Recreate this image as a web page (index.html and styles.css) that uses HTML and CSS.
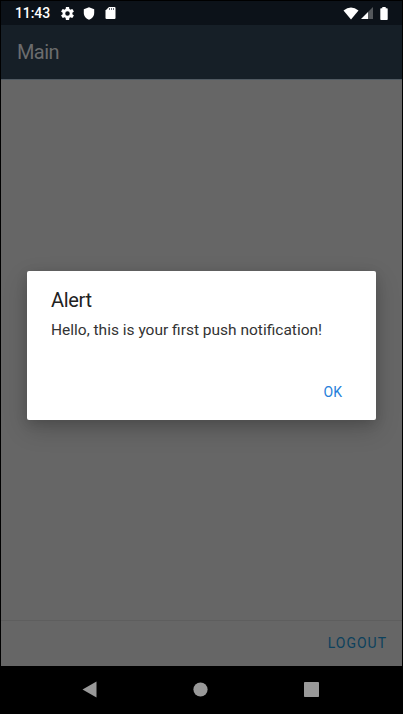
FILE: index.html
```html
<!DOCTYPE html>
<html lang="en">
<head>
<meta charset="utf-8">
<title>Main</title>
<link rel="stylesheet" href="styles.css">
</head>
<body>
<div class="phone">
  <div class="status">
    <span class="clock">11:43</span>
    <svg class="gear" width="13" height="13" viewBox="2 2 20 20"><path fill="#fff" fill-rule="evenodd" d="M19.43 12.98c.04-.32.07-.64.07-.98s-.03-.66-.07-.98l2.11-1.65c.19-.15.24-.42.12-.64l-2-3.46c-.12-.22-.39-.3-.61-.22l-2.49 1c-.52-.4-1.08-.73-1.69-.98l-.38-2.65C14.46 2.18 14.25 2 14 2h-4c-.25 0-.46.18-.49.42l-.38 2.65c-.61.25-1.17.59-1.69.98l-2.49-1c-.23-.09-.49 0-.61.22l-2 3.46c-.13.22-.07.49.12.64l2.11 1.65c-.04.32-.07.65-.07.98s.03.66.07.98l-2.11 1.65c-.19.15-.24.42-.12.64l2 3.46c.12.22.39.3.61.22l2.49-1c.52.4 1.08.73 1.69.98l.38 2.65c.03.24.24.42.49.42h4c.25 0 .46-.18.49-.42l.38-2.65c.61-.25 1.17-.59 1.69-.98l2.49 1c.23.09.49 0 .61-.22l2-3.46c.12-.22.07-.49-.12-.64l-2.11-1.65zM12 15.5A3.5 3.5 0 1 1 12 8.500a3.5 3.5 0 0 1 0 7z"/></svg>
    <svg class="shield" width="12" height="13" viewBox="0 0 12 13"><path fill="#fff" d="M6 .2 11.200 2.200V6c0 3-2.300 5.800-5.200 6.800C3.100 11.800.8 9 .8 6V2.200z"/></svg>
    <svg class="card" width="11" height="12" viewBox="0 0 11 12"><path fill="#fff" d="M4 0h5.500a1 1 0 0 1 1 1v10a1 1 0 0 1-1 1h-8a1 1 0 0 1-1-1V3.500z"/><path stroke="#58606a" stroke-width=".9" d="M4.500 1v2M6.500 1v2M8.500 1v2"/></svg>
    <svg class="wifi" width="16" height="13" viewBox="0 0 16 13"><path fill="#fff" d="M.5 3.500Q8-2.500 15.500 3.500L8 12.500z"/></svg>
    <svg class="signal" width="12" height="12" viewBox="0 0 12 12"><path fill="#fff" d="M0 12 7 5v7z"/><path fill="#54585c" d="M7 5 12 0v12H7z"/></svg>
    <svg class="battery" width="8" height="13" viewBox="0 0 8 13"><path fill="#fff" d="M2.300 0h3.400v1.200H7q.7 0 .7.700v10.300q0 .7-.7.700H1q-.7 0-.7-.7V1.900q0-.7.700-.7h1.300z"/></svg>
  </div>
  <header class="toolbar">Main</header>
  <main class="content">
    <section class="dialog">
      <h1>Alert</h1>
      <p>Hello, this is your first push notification!</p>
      <button class="ok">OK</button>
    </section>
  </main>
  <footer class="footer"><span class="logout">LOGOUT</span></footer>
  <nav class="nav">
    <svg width="15" height="17" viewBox="0 0 15 17"><path fill="#999" d="M.5 8.500 14.500.5v16z"/></svg>
    <svg width="15" height="15" viewBox="0 0 15 15"><circle cx="7.500" cy="7.500" r="7.100" fill="#999"/></svg>
    <svg width="15" height="15" viewBox="0 0 15 15"><rect width="15" height="15" rx=".8" fill="#999"/></svg>
  </nav>
</div>
</body>
</html>
```
FILE: styles.css
```css
* { box-sizing: border-box; }
body { margin: 0; background: #000; font-family: Roboto, "Liberation Sans", sans-serif; }
.phone { width: 403px; height: 714px; padding: 1px 1px 0; display: flex; flex-direction: column; overflow: hidden; }
.status { height: 24px; flex: none; background: #0c1219; display: flex; align-items: center; padding: 0 14px 0 14px; }
.clock { color: #fff; font-size: 14px; font-weight: 500; line-height: 16px; letter-spacing: -.1px; width: 35px; white-space: nowrap; }
.gear { margin-left: 11px; }
.shield { margin-left: 9px; }
.card { margin-left: 10px; }
.wifi { margin-left: auto; }
.signal { margin-left: 2px; }
.battery { margin-left: 7px; }
.toolbar { height: 54px; flex: none; background: #161f27; color: #6b6c6d; font-size: 20px; letter-spacing: -.6px; line-height: 54px; padding-left: 16px; }
.content { flex: 1; background: #666; border-top: 1px solid #505961; padding: 191px 26px 0; }
.dialog { height: 149px; background: #fff; border-radius: 2px; box-shadow: 0 9px 24px rgba(0,0,0,.2), 0 3px 12px rgba(0,0,0,.12); padding: 18px 26px 0 24px; display: flex; flex-direction: column; }
h1 { margin: 0; font-size: 20px; font-weight: 400; letter-spacing: -.35px; line-height: 22px; color: #222; }
p { margin: 9px 0 0; font-size: 15.500px; line-height: 20px; color: #333; white-space: nowrap; }
.ok { margin: 42px 8px 0 0; align-self: flex-end; padding: 0; border: 0; background: none; color: #2680da; font: 400 14px/20px Roboto, sans-serif; }
.footer { height: 46px; flex: none; background: #666; border-top: 1px solid #5e5e5e; display: flex; align-items: center; justify-content: flex-end; padding: 0 15px 2px 0; }
.logout { color: #0c415d; font-size: 14px; letter-spacing: 1px; line-height: 20px; }
.nav { height: 48px; flex: none; display: flex; align-items: center; justify-content: space-between; padding: 0 83px 2px 81px; }
```
